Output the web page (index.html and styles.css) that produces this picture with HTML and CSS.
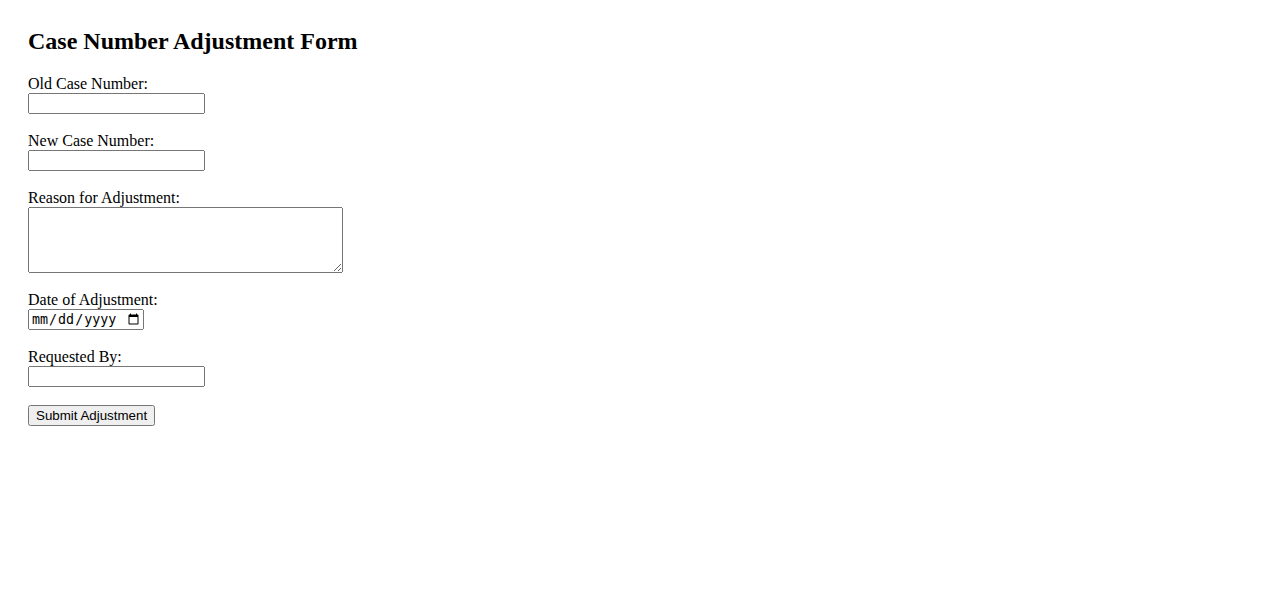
FILE: index.html
```html
<!DOCTYPE html>
<html lang="en">
<head>
  <meta charset="UTF-8">
  <meta name="viewport" content="width=device-width, initial-scale=1.0">
  <title>Case Number Adjustment Form</title>
  <link rel="stylesheet" href="styles.css">
</head>
<body>
  <h2>Case Number Adjustment Form</h2>
  <form class="adjust-form">
    <label for="old-case">Old Case Number:</label><br>
    <input type="text" class="field" id="old-case" name="old-case"><br><br>

    <label for="new-case">New Case Number:</label><br>
    <input type="text" class="field" id="new-case" name="new-case"><br><br>

    <label for="reason">Reason for Adjustment:</label><br>
    <textarea class="field-area" id="reason" name="reason" rows="4" cols="40"></textarea><br><br>

    <label for="adj-date">Date of Adjustment:</label><br>
    <input type="date" class="field-date" id="adj-date" name="adj-date"><br><br>

    <label for="requested-by">Requested By:</label><br>
    <input type="text" class="field" id="requested-by" name="requested-by"><br><br>

    <input type="submit" class="submit-btn" value="Submit Adjustment">
  </form>
</body>
</html>
```

FILE: styles.css
```css
body {
  margin: 8px;
  padding: 20px;
  font-family: "Liberation Serif", "Times New Roman", serif;
  font-size: 16px;
  color: #000;
  background-color: #fff;
}
h2 {
  margin-top: 0;
  font-size: 24px;
}
.field {
  box-sizing: border-box;
  width: 177px;
  height: 21px;
}
.field-area {
  box-sizing: border-box;
  width: 315px;
  height: 66px;
  vertical-align: bottom;
}
.field-date {
  box-sizing: border-box;
  width: 116px;
  height: 21px;
}
```
